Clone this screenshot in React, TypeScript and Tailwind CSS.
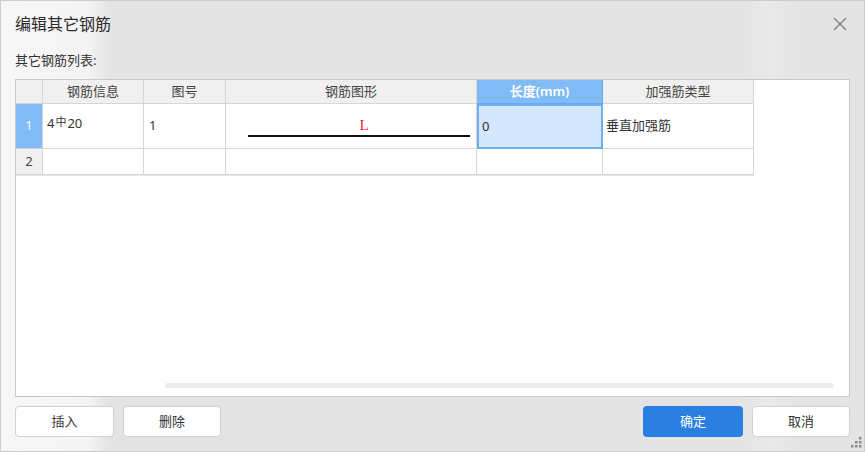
const font = "font-['Noto_Sans','Noto_Sans_CJK_SC',sans-serif]";

const cols = [
  { title: "钢筋信息", w: "w-[101px]" },
  { title: "图号", w: "w-[82px]" },
  { title: "钢筋图形", w: "w-[251px]" },
  { title: "长度(mm)", w: "w-[126px]", active: true },
  { title: "加强筋类型", w: "w-[151px]" },
];

function Grip() {
  const dots = [
    [8, 0],
    [4, 4],
    [8, 4],
    [0, 8],
    [4, 8],
    [8, 8],
  ];
  return (
    <svg className="absolute right-[3px] bottom-[4px]" width="11" height="11" viewBox="0 0 11 11">
      {dots.map(([x, y]) => (
        <rect key={`${x}-${y}`} x={x} y={y} width="2.5" height="2.5" fill="#8a8a8a" />
      ))}
    </svg>
  );
}

export default function App() {
  return (
    <div
      className={`${font} relative w-[865px] h-[452px] overflow-hidden px-[15px] text-[#333] bg-[linear-gradient(90deg,#f7f7f7_0px,#f4f4f4_88px,#e4e4e4_108px,#e4e4e4_740px,#e9e9e9_770px,#e4e4e4_800px)] shadow-[inset_0_0_0_1px_#cdcdcd]`}
    >
      <div className="h-[48px] flex items-center justify-between">
        <span className="text-[16px] text-[#2b2b2b]">编辑其它钢筋</span>
        <svg width="14" height="14" viewBox="0 0 14 14" className="mr-[3px]">
          <path d="M1 1 L13 13 M13 1 L1 13" stroke="#7a7a7a" strokeWidth="1.2" />
        </svg>
      </div>
      <div className="h-[31px] text-[13px] leading-[20px] pt-[2px]">其它钢筋列表:</div>

      <div className="h-[318px] border border-[#c9c9c9] bg-white flex flex-col">
        <div className="flex flex-col w-max text-[13px]">
          <div className="flex h-[24px] bg-[#f0f0f0]">
            <div className="w-[27px] border-r border-b border-[#d6d6d6]" />
            {cols.map((c) => (
              <div
                key={c.title}
                className={`${c.w} flex items-center justify-center border-r border-b ${
                  c.active ? "bg-[#80bbf6] text-white font-semibold border-[#6aaaf0]" : "border-[#d6d6d6] text-[#444]"
                }`}
              >
                {c.title}
              </div>
            ))}
          </div>

          <div className="flex h-[45px]">
            <div className="w-[27px] bg-[#80bbf6] text-white flex items-center justify-center border-r border-b border-[#d6d6d6]">
              1
            </div>
            <div className="w-[101px] pl-[4px] pt-[10px] border-r border-b border-[#d6d6d6]">
              4<span className="text-[11px] relative top-[-2px] mx-[1px]">中</span>20
            </div>
            <div className="w-[82px] pl-[5px] flex items-center border-r border-b border-[#d6d6d6]">1</div>
            <div className="w-[251px] border-r border-b border-[#d6d6d6] flex flex-col pl-[22px] pr-[6px] pt-[14px]">
              <span className="self-center font-['Liberation_Serif',serif] text-[15px] leading-[15px] text-[#ff1a1a] pl-[10px]">
                L
              </span>
              <div className="h-[2px] bg-[#111] mt-[2px]" />
            </div>
            <div className="w-[126px] bg-[#d5e8fb] border-2 border-[#6eaef0] pl-[3px] flex items-center">0</div>
            <div className="w-[151px] pl-[3px] flex items-center border-r border-b border-[#d6d6d6]">垂直加强筋</div>
          </div>

          <div className="flex h-[26px] shadow-[0_1px_0_#e6e6e6]">
            <div className="w-[27px] bg-[#f0f0f0] flex items-center justify-center border-r border-b border-[#d6d6d6] text-[#444]">
              2
            </div>
            {cols.map((c) => (
              <div key={c.title} className={`${c.w} border-r border-b border-[#d6d6d6]`} />
            ))}
          </div>
        </div>

        <div className="flex-1" />
        <div className="h-[5px] ml-[149px] mr-[15px] mb-[8px] rounded-full bg-[#ececec]" />
      </div>

      <div className="mt-[9px] flex text-[13px]">
        <button className="w-[99px] h-[31px] rounded-[4px] border border-[#d2d2d2] bg-white">插入</button>
        <button className="ml-[9px] w-[98px] h-[31px] rounded-[4px] border border-[#d2d2d2] bg-white">删除</button>
        <div className="flex-1" />
        <button className="w-[100px] h-[31px] rounded-[4px] bg-[#2b7fe1] text-white">确定</button>
        <button className="ml-[9px] w-[98px] h-[31px] rounded-[4px] border border-[#d2d2d2] bg-white">取消</button>
      </div>

      <Grip />
    </div>
  );
}
